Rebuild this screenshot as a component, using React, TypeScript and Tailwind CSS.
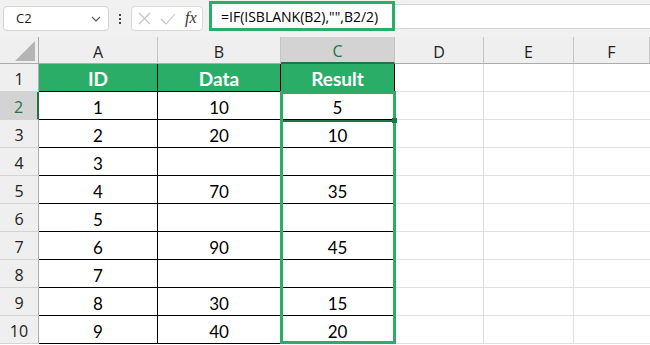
import React from 'react';

const cols = ['A', 'B', 'C', 'D', 'E', 'F'];

const rows: string[][] = [
  ['ID', 'Data', 'Result'],
  ['1', '10', '5'],
  ['2', '20', '10'],
  ['3', '', ''],
  ['4', '70', '35'],
  ['5', '', ''],
  ['6', '90', '45'],
  ['7', '', ''],
  ['8', '30', '15'],
  ['9', '40', '20'],
];

function NameBox() {
  return (
    <div className="ml-[3px] w-[106px] h-[25px] bg-white border border-[#d4d4d4] rounded-[4px] flex items-center justify-between pl-[12px] pr-[7px]">
      <span className="text-[13px] text-[#222] font-['Open_Sans',sans-serif]">C2</span>
      <svg width="10" height="6" viewBox="0 0 10 6">
        <path d="M1 1l4 4 4-4" fill="none" stroke="#555" strokeWidth="1.1" />
      </svg>
    </div>
  );
}

function FxBox() {
  return (
    <div className="w-[72px] h-[25px] bg-white border border-[#d9d9d9] rounded-[4px] flex items-center pl-[6px] gap-[9px]">
      <svg width="13" height="13" viewBox="0 0 13 13">
        <path d="M1 1l11 11M12 1L1 12" stroke="#c2c2c2" strokeWidth="1.1" />
      </svg>
      <svg width="16" height="12" viewBox="0 0 16 12">
        <path d="M1 6l5 5 9-10" fill="none" stroke="#c2c2c2" strokeWidth="1.1" />
      </svg>
      <span className="text-[16px] italic text-[#333] font-['Liberation_Serif',serif] leading-none -mt-[2px]">fx</span>
    </div>
  );
}

export default function App() {
  return (
    <div className="w-[650px] h-[345px] overflow-hidden bg-white font-['Lato',sans-serif]">
      {/* formula bar */}
      <div className="h-[37px] bg-[#f1f1f1] flex items-center">
        <NameBox />
        <div className="w-[22px] flex flex-col items-center gap-[2px]">
          <span className="w-[2px] h-[2px] bg-[#444]" />
          <span className="w-[2px] h-[2px] bg-[#444]" />
          <span className="w-[2px] h-[2px] bg-[#444]" />
        </div>
        <FxBox />
        <div className="ml-[6px] w-[186px] h-[30px] -mt-[5px] border-[3px] border-[#2aae67] bg-white flex items-center pl-[9px]">
          <span className="text-[14px] text-black font-['Open_Sans',sans-serif] whitespace-nowrap">
            =IF(ISBLANK(B2),"",B2/2)
          </span>
        </div>
        <div className="flex-1 h-[25px] -mt-[4px] bg-white border-y border-[#d4d4d4]" />
      </div>

      {/* grid */}
      <div className="relative grid grid-cols-[39px_119px_123px_114px_89px_90px_76px] grid-rows-[27px_repeat(10,28px)]">
        <div className="bg-[#efefef] border-r border-b border-[#ababab] flex items-end justify-end pr-[3px] pb-[2px]">
          <svg width="20" height="20" viewBox="0 0 20 20">
            <path d="M20 0L20 20L0 20Z" fill="#b4b4b4" />
          </svg>
        </div>
        {cols.map((c) =>
          c === 'C' ? (
            <div
              key={c}
              className="bg-[#d3d3d3] border-b-2 border-b-[#217346] border-r border-r-[#c4c4c4] flex items-center justify-center pt-[3px] text-[16px] text-[#217346] font-['Open_Sans',sans-serif]"
            >
              {c}
            </div>
          ) : (
            <div
              key={c}
              className="bg-[#efefef] border-b border-b-[#ababab] border-r border-r-[#c4c4c4] flex items-center justify-center pt-[3px] text-[16px] text-[#222] font-['Open_Sans',sans-serif]"
            >
              {c}
            </div>
          )
        )}

        {rows.map((r, i) => (
          <React.Fragment key={i}>
            {i === 1 ? (
              <div className="bg-[#d3d3d3] border-r-2 border-r-[#217346] border-b border-b-[#d4d4d4] flex items-center justify-center pt-[2px] text-[16px] text-[#217346] font-['Open_Sans',sans-serif]">
                {i + 1}
              </div>
            ) : (
              <div className="bg-[#efefef] border-r border-r-[#ababab] border-b border-b-[#d4d4d4] flex items-center justify-center pt-[2px] text-[16px] text-[#222] font-['Open_Sans',sans-serif]">
                {i + 1}
              </div>
            )}
            {r.map((v, j) =>
              i === 0 ? (
                <div
                  key={j}
                  className="bg-[#2aae67] border-r border-b border-black flex items-center justify-center pt-[3px] text-[19px] font-bold text-white"
                >
                  {v}
                </div>
              ) : (
                <div
                  key={j}
                  className="border-r border-b border-black flex items-center justify-center pt-[4px] text-[17px] text-black"
                >
                  {v}
                </div>
              )
            )}
            <div className="border-r border-b border-[#e1e1e1]" />
            <div className="border-r border-b border-[#e1e1e1]" />
            <div className="border-b border-[#e1e1e1]" />
          </React.Fragment>
        ))}

        {/* selected range C2:C10 */}
        <div className="absolute left-[280px] top-[54px] w-[116px] h-[253px] border-[3px] border-[#2aae67]" />
        {/* active cell C2 */}
        <div className="absolute left-[283px] top-[83px] w-[110px] h-[2px] bg-[#217346]" />
        <div className="absolute left-[392px] top-[81px] w-[5px] h-[5px] bg-[#217346]" />
      </div>
    </div>
  );
}
